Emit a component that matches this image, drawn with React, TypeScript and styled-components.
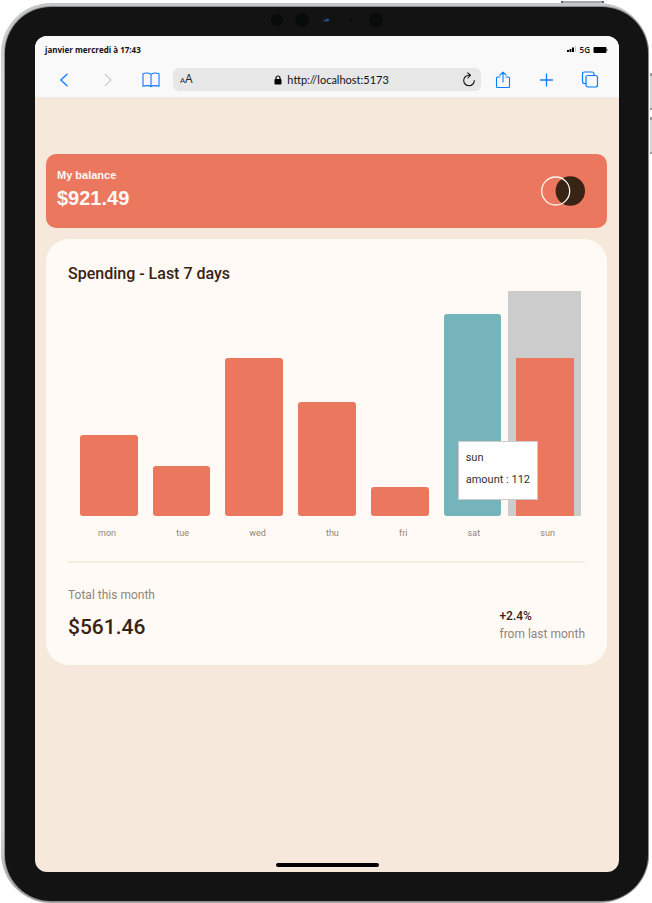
import React from 'react';
import styled, { createGlobalStyle } from 'styled-components';

const GlobalStyle = createGlobalStyle`
  * { box-sizing: border-box; }
  body { margin: 0; background: #fff; font-family: Roboto, 'Liberation Sans', sans-serif; }
  h1, h2, p { margin: 0; }
  button { font: inherit; border: 0; padding: 0; background: none; cursor: pointer; }
`;

const Stage = styled.div`
  position: relative;
  display: flex;
  min-height: 100vh;
  padding: 3px 3px 0 1px;
`;

const SideButton = styled.span<{ $top: number }>`
  position: absolute;
  right: 0;
  top: ${(p) => p.$top}px;
  height: 37px;
  width: 2px;
  background: #d5d6d8;
  border-top: 3px solid #9a9a9a;
  border-bottom: 2px solid #9a9a9a;
`;

const TopButton = styled.span`
  position: absolute;
  top: 1px;
  right: 48px;
  width: 43px;
  height: 2px;
  background: #a3a8a7;
  border-left: 2px solid #5c605f;
  border-right: 2px solid #5c605f;
`;

const Shell = styled.div`
  display: flex;
  flex: 1;
  border-radius: 50px;
  padding: 4px 1px 2px 4px;
  background: linear-gradient(#c3c5c6, #d3d4d6 8%, #d3d4d6 92%, #a5a2a4);
`;

const Bezel = styled.div`
  display: flex;
  flex-direction: column;
  flex: 1;
  padding: 0 29px 29px 30px;
  border-radius: 46px;
  background: #131313;
  box-shadow: 0 0 0 1px #8b8d8e;
`;

const Sensors = styled.div`
  display: flex;
  height: 29px;
  padding-bottom: 4px;
  justify-content: center;
  align-items: center;
`;

const Screen = styled.div`
  flex: 1;
  display: flex;
  flex-direction: column;
  overflow: hidden;
  border-radius: 12px;
  background: #f6e9dc;
`;

const Chrome = styled.header`
  background: #f9f9f9;
  border-bottom: 1px solid #ececec;
`;

const StatusBar = styled.div`
  display: flex;
  justify-content: space-between;
  align-items: center;
  height: 27px;
  padding: 0 11px 0 10px;
  font: 700 8px/12px 'Open Sans', sans-serif;
  color: #111;
`;

const Signal = styled.div`
  display: flex;
  align-items: center;
  gap: 3px;
  font-weight: 600;
`;

const Toolbar = styled.nav`
  display: flex;
  align-items: center;
  height: 34px;
  padding: 0 17px 1px;
`;

const ToolGroup = styled.div`
  display: flex;
  justify-content: space-between;
  width: 111px;
`;

const ToolButton = styled.button<{ $tone?: string }>`
  display: grid;
  place-items: center;
  width: 24px;
  height: 24px;
  color: ${(p) => p.$tone ?? '#0a7cff'};
`;

const AddressBar = styled.div`
  display: flex;
  align-items: center;
  flex: 1;
  height: 23px;
  margin: 0 10px;
  padding-left: 7px;
  border-radius: 6px;
  background: #e7e7e8;
  color: #111;
`;

const TextSize = styled.button`
  font: 12px/16px 'Open Sans', sans-serif;
  color: #222;
  small { font-size: 8px; }
`;

const Address = styled.div`
  display: flex;
  flex: 1;
  align-items: center;
  justify-content: center;
  gap: 5px;
  padding-left: 14px;
`;

const AddressInput = styled.input`
  width: 102px;
  padding: 0;
  border: 0;
  outline: 0;
  background: none;
  color: #111;
  font: 11px/16px Lato, sans-serif;
`;

const Main = styled.main`
  flex: 1;
  padding: 56px 12px 0 11px;
`;

const Balance = styled.section`
  display: flex;
  justify-content: space-between;
  align-items: center;
  height: 74px;
  padding: 0 22px 0 11px;
  border-radius: 10px;
  background: #ec775f;
  color: #fffaf5;
  font-family: 'Liberation Sans', Arial, sans-serif;
`;

const BalanceLabel = styled.h1`
  font-size: 11px;
  line-height: 14px;
  font-weight: 700;
`;

const BalanceAmount = styled.p`
  font-size: 20px;
  line-height: 32px;
  font-weight: 700;
`;

const Card = styled.section`
  margin-top: 11px;
  padding: 22px;
  border-radius: 23px;
  background: #fffaf5;
  color: #382314;
`;

const Title = styled.h2`
  font-size: 16px;
  line-height: 26px;
  font-weight: 500;
`;

const Chart = styled.div`
  position: relative;
  display: grid;
  grid-template-columns: repeat(7, 1fr);
  height: 225px;
  margin: 4px 4px 0;
`;

const Slot = styled.div<{ $active?: boolean }>`
  display: flex;
  align-items: flex-end;
  padding: 0 7px 0 8px;
  background: ${(p) => (p.$active ? '#ccc' : 'transparent')};
`;

const Bar = styled.div<{ $peak: boolean; $square: boolean }>`
  flex: 1;
  border-radius: ${(p) => (p.$square ? 0 : 3)}px;
  background: ${(p) => (p.$peak ? '#76b4bc' : '#ec775f')};
`;

const Tooltip = styled.div`
  position: absolute;
  right: 43px;
  bottom: 16px;
  padding: 5px 7px 8px;
  border: 1px solid #ccc;
  background: #fff;
  color: #333;
  font-size: 11px;
  line-height: 22px;
  white-space: nowrap;
`;

const Days = styled.div`
  display: flex;
  justify-content: space-around;
  padding: 10px 0 20px;
  border-bottom: 2px solid #f8ecdf;
  font-size: 9px;
  line-height: 15px;
  color: #92857a;
`;

const Summary = styled.div`
  display: flex;
  justify-content: space-between;
  align-items: flex-end;
  padding-top: 23px;
`;

const Muted = styled.p`
  font-size: 12px;
  line-height: 18px;
  color: #92857a;
`;

const Total = styled.p`
  margin-top: 7px;
  font-size: 21px;
  line-height: 32px;
  font-weight: 500;
`;

const Change = styled.p`
  font-size: 12px;
  line-height: 18px;
  font-weight: 500;
`;

const HomeBar = styled.div`
  width: 103px;
  height: 4px;
  margin: 0 auto 5px;
  border-radius: 2px;
  background: #000;
`;

const line = { fill: 'none', stroke: 'currentColor', strokeLinecap: 'round', strokeLinejoin: 'round' } as const;

const days = [
  { day: 'mon', height: 81 },
  { day: 'tue', height: 50 },
  { day: 'wed', height: 158 },
  { day: 'thu', height: 114 },
  { day: 'fri', height: 29 },
  { day: 'sat', height: 202 },
  { day: 'sun', height: 158 },
];
const peak = Math.max(...days.map((d) => d.height));
const active = 'sun';

export default function App() {
  return (
    <Stage>
      <GlobalStyle />
      <TopButton />
      <SideButton $top={73} />
      <SideButton $top={117} />
      <Shell>
        <Bezel>
          <Sensors>
            <svg width="112" height="16" viewBox="0 0 112 16" aria-hidden="true">
              <g fill="#070b0a">
                <circle cx="6" cy="8" r="6" />
                <circle cx="31" cy="8" r="7" />
                <circle cx="105" cy="8" r="7" />
                <circle cx="80" cy="8" r="1.5" />
              </g>
              <circle cx="54" cy="8.5" r="1.2" fill="#174a87" />
              <circle cx="56.5" cy="8" r="1.5" fill="#1d559c" />
            </svg>
          </Sensors>
          <Screen>
            <Chrome>
              <StatusBar>
                <span>janvier mercredi à 17:43</span>
                <Signal>
                  <svg width="10" height="7" viewBox="0 0 10 7" aria-hidden="true">
                    <path d="M0 4h2v2H0zM2.6 3h1.8v3H2.6zM5 1.5h2V6H5z" fill="#000" />
                    <path d="M8 0h1v6H8z" fill="#c4c4c4" />
                  </svg>
                  5G
                  <svg width="15" height="8" viewBox="0 0 15 8" aria-hidden="true">
                    <rect x=".5" y="1" width="13" height="6" rx="1" fill="#000" />
                    <path d="M14 3v2" stroke="#555" />
                  </svg>
                </Signal>
              </StatusBar>
              <Toolbar>
                <ToolGroup>
                  <ToolButton aria-label="Back">
                    <svg width="10" height="14" viewBox="0 0 10 14" {...line} strokeWidth="1.3">
                      <path d="M8 1.2 1.8 7 8 12.8" />
                    </svg>
                  </ToolButton>
                  <ToolButton aria-label="Forward" $tone="#c9c9c9">
                    <svg width="10" height="14" viewBox="0 0 10 14" {...line} strokeWidth="1.1">
                      <path d="m2 1.2 6 5.8-6 5.8" />
                    </svg>
                  </ToolButton>
                  <ToolButton aria-label="Bookmarks">
                    <svg width="18" height="16" viewBox="0 0 18 16" {...line} strokeWidth="1.1">
                      <path d="M9 2.5v12M9 2.5C7.5.6 3.2.6 1 1.7v12.6c2.5-1 6.5-1 8 .3 1.5-1.3 5.5-1.3 8-.3V1.7C14.8.6 10.5.6 9 2.5Z" />
                    </svg>
                  </ToolButton>
                </ToolGroup>
                <AddressBar>
                  <TextSize aria-label="Text size"><small>A</small>A</TextSize>
                  <Address>
                    <svg width="8" height="10" viewBox="0 0 8 10" aria-hidden="true">
                      <rect x=".5" y="4" width="7" height="5.5" rx="1" fill="#000" />
                      <path d="M2 4.5V3a2 2 0 0 1 4 0v1.5" fill="none" stroke="#000" strokeWidth="1.2" />
                    </svg>
                    <AddressInput aria-label="Address" defaultValue="http://localhost:5173" />
                  </Address>
                  <ToolButton aria-label="Reload" $tone="#111">
                    <svg width="14" height="16" viewBox="0 0 14 16" {...line} strokeWidth="1.1">
                      <path d="M8.2 3.2H7A5.3 5.3 0 1 0 12.3 8.5M5.7.9l2.8 2.3-2.6 2.8" />
                    </svg>
                  </ToolButton>
                </AddressBar>
                <ToolGroup>
                  <ToolButton aria-label="Share">
                    <svg width="16" height="18" viewBox="0 0 16 18" {...line} strokeWidth="1.1">
                      <path d="M5 6H2.5Q1.5 6 1.5 7v8.5q0 1 1 1h11q1 0 1-1V7q0-1-1-1H11M8 11V1.2M5 4l3-2.8L11 4" />
                    </svg>
                  </ToolButton>
                  <ToolButton aria-label="New tab">
                    <svg width="14" height="14" viewBox="0 0 14 14" {...line} strokeWidth="1.3">
                      <path d="M6.5 1v12M.5 7h12" />
                    </svg>
                  </ToolButton>
                  <ToolButton aria-label="Tabs">
                    <svg width="18" height="17" viewBox="0 0 18 17" {...line} strokeWidth="1.2">
                      <rect x="5" y="4.5" width="11.5" height="11.5" rx="2" />
                      <path d="M5 12.5H3.5q-2 0-2-2V3q0-2 2-2H11q2 0 2 2v1.5" />
                    </svg>
                  </ToolButton>
                </ToolGroup>
              </Toolbar>
            </Chrome>
            <Main>
              <Balance>
                <div>
                  <BalanceLabel>My balance</BalanceLabel>
                  <BalanceAmount>$921.49</BalanceAmount>
                </div>
                <svg width="44" height="30" viewBox="0 0 44 30" aria-hidden="true">
                  <circle cx="29.3" cy="15" r="14.7" fill="#382314" />
                  <circle cx="14.7" cy="15" r="14" fill="none" stroke="#fffaf5" strokeWidth="1.3" />
                </svg>
              </Balance>
              <Card>
                <Title>Spending - Last 7 days</Title>
                <Chart>
                  {days.map((d) => (
                    <Slot key={d.day} $active={d.day === active}>
                      <Bar $peak={d.height === peak} $square={d.day === active} style={{ height: d.height }} />
                    </Slot>
                  ))}
                  <Tooltip role="tooltip">
                    <p>sun</p>
                    <p>amount : 112</p>
                  </Tooltip>
                </Chart>
                <Days>
                  {days.map((d) => <span key={d.day}>{d.day}</span>)}
                </Days>
                <Summary>
                  <div>
                    <Muted>Total this month</Muted>
                    <Total>$561.46</Total>
                  </div>
                  <div>
                    <Change>+2.4%</Change>
                    <Muted>from last month</Muted>
                  </div>
                </Summary>
              </Card>
            </Main>
            <HomeBar />
          </Screen>
        </Bezel>
      </Shell>
    </Stage>
  );
}
